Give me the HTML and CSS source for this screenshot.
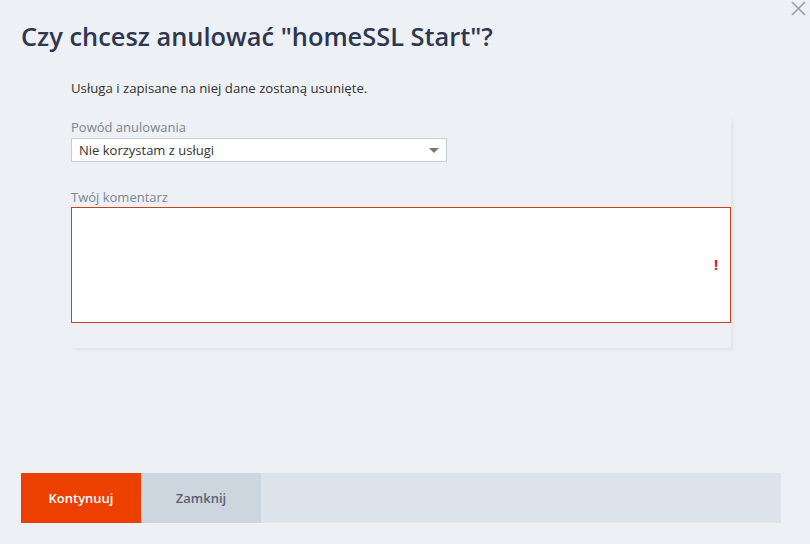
FILE: index.html
```html
<!DOCTYPE html>
<html lang="pl">
<head>
    <meta charset="UTF-8">
    <title>Anulowanie usługi</title>
    <link rel="stylesheet" href="styles.css">
</head>
<body>
    <div class="dialog">
        <button class="close" type="button" aria-label="Zamknij">
            <svg width="15" height="15" viewBox="0 0 15 15"><path d="M1 1L14 14M14 1L1 14" stroke="#9aa0a8" stroke-width="1.6" fill="none"/></svg>
        </button>
        <h1>Czy chcesz anulować "homeSSL Start"?</h1>
        <p class="lead">Usługa i zapisane na niej dane zostaną usunięte.</p>

        <form class="card" id="cancel-form">
            <label for="powod">Powód anulowania</label>
            <div class="select-wrap">
                <select id="powod">
                    <option>Nie korzystam z usługi</option>
                    <option>Za wysoka cena</option>
                    <option>Inny powód</option>
                </select>
                <span class="arrow"></span>
            </div>

            <label for="komentarz" class="label-comment">Twój komentarz</label>
            <div class="textarea-wrap">
                <textarea id="komentarz"></textarea>
                <span class="warn">!</span>
            </div>
        </form>

        <div class="actions">
            <button type="submit" form="cancel-form" class="btn primary">Kontynuuj</button>
            <button type="button" class="btn secondary">Zamknij</button>
        </div>
    </div>
</body>
</html>
```

FILE: styles.css
```css
body {
    margin: 0;
    background-color: #edf0f4;
    font-family: 'Open Sans', sans-serif;
    color: #333;
}

.dialog {
    position: relative;
    width: 810px;
    height: 544px;
    padding: 21px 29px 0 21px;
    box-sizing: border-box;
}

.close {
    position: absolute;
    top: 1px;
    right: 4px;
    padding: 0;
    border: none;
    background: none;
    cursor: pointer;
}

h1 {
    margin: 0;
    font-size: 25.4px;
    font-weight: 600;
    color: #2e3650;
    line-height: 30px;
}

.lead {
    margin: 28px 0 0 50px;
    font-size: 13.2px;
    line-height: 18px;
}

.card {
    margin: 21px 50px 0 50px;
    height: 230px;
    box-shadow: 2px 2px 4px rgba(0, 0, 0, 0.06);
}

label {
    display: block;
    font-size: 13px;
    line-height: 18px;
    color: #7d8590;
}

.select-wrap {
    position: relative;
    width: 376px;
    margin-top: 2px;
}

select {
    display: block;
    width: 100%;
    height: 24px;
    padding: 0 0 0 7px;
    border: 1px solid #c9ced6;
    background-color: #fff;
    font-family: inherit;
    font-size: 13px;
    color: #333;
    appearance: none;
    border-radius: 0;
}

.arrow {
    position: absolute;
    right: 8px;
    top: 10px;
    border-left: 5px solid transparent;
    border-right: 5px solid transparent;
    border-top: 5px solid #777;
}

.label-comment {
    margin-top: 26px;
}

.textarea-wrap {
    position: relative;
    margin-top: 1px;
}

textarea {
    display: block;
    width: 100%;
    height: 116px;
    box-sizing: border-box;
    border: 1px solid #c8431c;
    resize: none;
    font-family: inherit;
    outline: none;
}

.warn {
    position: absolute;
    right: 13px;
    top: 48px;
    font-size: 14px;
    font-weight: bold;
    color: #e0141e;
}

.actions {
    display: flex;
    margin-top: 125px;
    background-color: #dde3ea;
    height: 50px;
}

.btn {
    width: 120px;
    border: none;
    font-family: inherit;
    font-size: 13px;
    font-weight: 600;
    cursor: pointer;
}

.primary {
    background-color: #ec4000;
    color: #fff;
}

.secondary {
    background-color: #cdd5df;
    color: #5b6270;
}
```
